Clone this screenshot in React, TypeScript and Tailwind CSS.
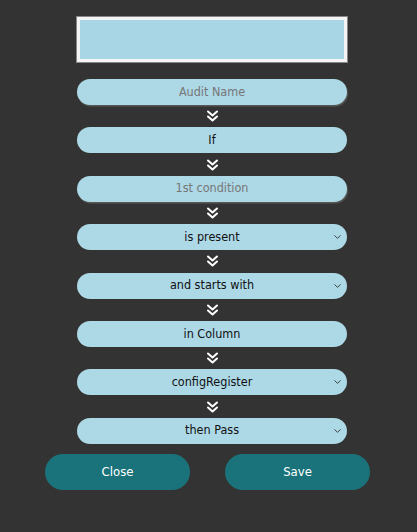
import { ChevronDown } from "lucide-react";

const steps: { label: string; kind: "input" | "text" | "select" }[] = [
  { label: "Audit Name", kind: "input" },
  { label: "If", kind: "text" },
  { label: "1st condition", kind: "input" },
  { label: "is present", kind: "select" },
  { label: "and starts with", kind: "select" },
  { label: "in Column", kind: "text" },
  { label: "configRegister", kind: "select" },
  { label: "then Pass", kind: "select" },
];

function DoubleChevron() {
  return (
    <div className="flex h-[22.4px] items-center justify-center">
      <svg width="13" height="12" viewBox="0 0 13 12" fill="none" stroke="#ffffff" strokeWidth="2" strokeLinecap="round" strokeLinejoin="round">
        <path d="M2 1.5 L6.5 5.5 L11 1.5" />
        <path d="M2 6.5 L6.5 10.5 L11 6.5" />
      </svg>
    </div>
  );
}

function Step({ label, kind }: { label: string; kind: "input" | "text" | "select" }) {
  if (kind === "input") {
    return (
      <div className="flex h-[26px] items-center justify-center rounded-[13px] bg-[#add8e6] text-[12.5px] text-[#767676] shadow-[1px_1.5px_1px_#5a5a5a]">
        {label}
      </div>
    );
  }
  return (
    <div className="relative flex h-[26px] items-center justify-center rounded-[13px] bg-[#add8e6] text-[12.5px] text-[#111]">
      {label}
      {kind === "select" && (
        <ChevronDown size={11} strokeWidth={2} className="absolute right-[4px] top-1/2 -translate-y-1/2 text-[#333]" />
      )}
    </div>
  );
}

export default function App() {
  return (
    <div className="min-h-[532px] w-full bg-[#333333] pt-[17px] font-['DejaVu_Sans_Condensed','DejaVu_Sans',sans-serif] [font-stretch:condensed]">
      <div className="ml-[77px] w-[270px]">
        <div className="h-[45px] border-[3px] border-[#f4f4f4] bg-[#a8d6e4] outline outline-1 outline-[#888]" />
        <div className="mt-[17px]">
          {steps.map((step, i) => (
            <div key={step.label}>
              <Step label={step.label} kind={step.kind} />
              {i < steps.length - 1 && <DoubleChevron />}
            </div>
          ))}
        </div>
      </div>
      <div className="mt-[10px] ml-[45px] flex w-[325px] justify-between">
        <button type="button" className="h-[36px] w-[145px] rounded-[18px] bg-[#1a737b] text-[13px] text-white">
          Close
        </button>
        <button type="button" className="h-[36px] w-[145px] rounded-[18px] bg-[#1a737b] text-[13px] text-white">
          Save
        </button>
      </div>
    </div>
  );
}
